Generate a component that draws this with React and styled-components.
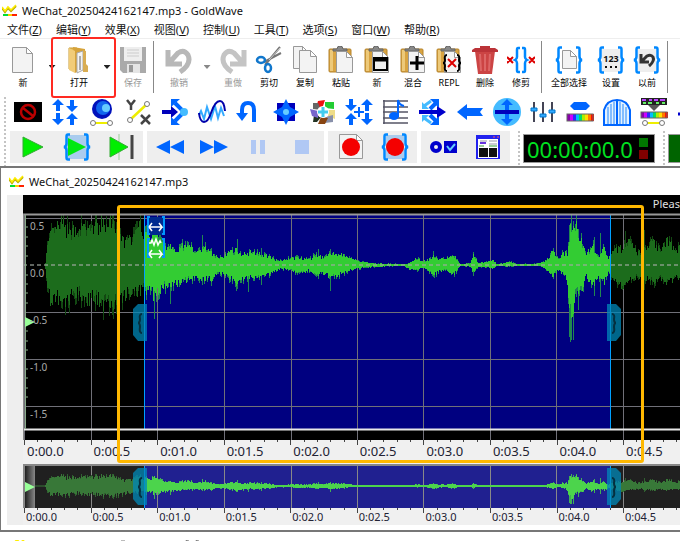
import React from 'react';
import styled, { createGlobalStyle } from 'styled-components';

const GlobalStyle = createGlobalStyle`
  * {
    margin: 0;
    padding: 0;
    box-sizing: border-box;
  }

  body {
    font-family: 'Noto Sans', 'Noto Sans CJK SC', sans-serif;
    background: #ffffff;
    color: #111111;
    overflow: hidden;
  }

  button {
    font: inherit;
    color: inherit;
    background: none;
    border: none;
  }

  svg {
    display: block;
    flex-shrink: 0;
  }
`;

const AppWindow = styled.div`
  position: relative;
  overflow: hidden;
  min-height: 100vh;
`;

const TitleBar = styled.header`
  display: flex;
  align-items: center;
  gap: 5px;
  height: ${props => (props.$inner ? '27px' : '21px')};
  padding-left: ${props => (props.$inner ? '8px' : '2px')};

  h1, h2 {
    font-size: 11px;
    font-weight: 400;
    line-height: 16px;
    white-space: nowrap;
  }
`;

const MenuBar = styled.nav`
  display: flex;
  align-items: center;
  height: 18px;
  gap: 14px;
  padding-left: 7px;
  border-bottom: 1px solid #eeeeee;
`;

const MenuItem = styled.button`
  font-size: 11px;
  line-height: 16px;
  white-space: nowrap;
`;

const Toolbar = styled.div`
  display: flex;
  height: 58px;
  padding-left: 5px;
`;

const ToolButton = styled.button`
  display: flex;
  flex: 0 0 ${props => (props.$wide ? '48px' : '36px')};
  flex-direction: column;
  align-items: center;
  padding-top: 7px;
  gap: 2px;
  color: ${props => (props.disabled ? '#999999' : '#000000')};
  font-size: 9px;
  line-height: 14px;
  white-space: nowrap;
`;

const DropButton = styled.button`
  display: flex;
  flex: 0 0 ${props => (props.$gap ? '20px' : '18px')};
  justify-content: center;
  padding: 26px 0 0 2px;
`;

const Caret = styled.span`
  width: 7px;
  height: 4px;
  background: ${props => (props.$faded ? '#888888' : '#222222')};
  clip-path: polygon(0 0, 100% 0, 50% 100%);
`;

const Separator = styled.span`
  flex: 0 0 1px;
  height: 52px;
  margin: 2px ${props => (props.$tight ? '3px' : '7px')} 0 2px;
  background: #888888;
`;

const GripRows = styled.div`
  display: flex;
`;

const Grip = styled.span`
  flex: 0 0 2px;
  margin: 0 3px 0 4px;
  background: repeating-linear-gradient(#c4c4c4 0 2px, transparent 2px 4px);
`;

const EffectBar = styled.div`
  display: flex;
  height: 34px;
`;

const EffectButton = styled.button`
  display: flex;
  flex: 0 0 37px;
  justify-content: center;
  align-items: center;
  height: 30px;

  &:nth-child(5n) {
    flex-basis: 36px;
  }
`;

const TransportBar = styled.div`
  display: flex;
  height: 35px;
  padding-left: 1px;
`;

const TransportGroup = styled.div`
  display: flex;
  height: 32px;
  margin-right: 4px;
  padding-left: 1px;
  background: #eeeeee;
`;

const TransportButton = styled.button`
  display: flex;
  flex: 0 0 44px;
  align-items: center;
  justify-content: center;
`;

const Counter = styled.div`
  display: flex;
  align-items: center;
  gap: 6px;
  flex: 0 0 132px;
  height: 29px;
  margin: 3px 4px 0 0;
  padding-left: 3px;
  border: 1px solid #999999;
  background: #000000;
  color: #00e020;
  font-size: 22px;
  line-height: 28px;
`;

const Lamps = styled.span`
  display: grid;
  gap: 3px;
`;

const Lamp = styled.i`
  width: 9px;
  height: 9px;
  background: ${props => props.$color};
`;

const Meter = styled.div`
  flex: 1;
  height: 29px;
  margin-top: 3px;
  border: 1px solid #999999;
  background: #006400;
`;

const DocumentWindow = styled.section`
  border: solid #777777;
  border-width: 2px 0 2px 1px;
`;

const DocumentBody = styled.div`
  display: flex;
  padding: 0 0 5px 6px;
`;

const Gutter = styled.div`
  flex: 0 0 16px;
  background: #eeeeee;
`;

const Tracks = styled.div`
  flex: 1;
  min-width: 0;
  overflow: hidden;
  background: #f0f0f0;
`;

const StatusStrip = styled.div`
  height: 18px;
  background: #000000;
  color: #e0e0e0;
  font-size: 11px;
  line-height: 18px;
  text-align: right;
`;

const Plot = styled.div`
  position: relative;
  margin-top: ${props => (props.$overview ? '5px' : '0')};
`;

const LevelScale = styled.div`
  position: absolute;
  top: 5px;
  left: 7px;
  color: #aaaaaa;
  font-size: 10px;
  line-height: 16px;

  span {
    display: block;
    height: 47px;
  }
`;

const Ruler = styled.div`
  display: grid;
  grid-template-columns: repeat(10, 1fr);
  height: ${props => (props.$small ? '17px' : '19px')};
  margin-left: 1px;
  color: #222233;
  font-size: ${props => (props.$small ? '11px' : '13px')};
  line-height: ${props => (props.$small ? '17px' : '22px')};
`;

const RulerMark = styled.span`
  position: relative;
  padding-left: ${props => (props.$small ? '1px' : '2px')};
  border-left: 1px solid transparent;
  white-space: nowrap;
`;

const MinorTicks = styled.i`
  position: absolute;
  inset: 0 0 auto -1px;
  display: grid;
  grid-template-columns: repeat(5, 1fr);
  height: 5px;

  b {
    height: 2px;
    border-left: 1px solid #444444;
  }

  b:first-child {
    height: 5px;
  }
`;

const Annotation = styled.div`
  position: absolute;
  pointer-events: none;
  border-radius: 3px;
`;

const OpenHighlight = styled(Annotation)`
  left: 51px;
  top: 37px;
  width: 65px;
  height: 61px;
  border: 2px solid #ff2a22;
`;

const SelectionHighlight = styled(Annotation)`
  left: 117px;
  top: 205px;
  width: 527px;
  height: 258px;
  border: 3px solid #ffb800;
`;

const NextWindow = styled.div`
  padding: 8px 0 0 13px;
`;

const BLUE = '#0066ff';
const NAVY = '#0000cc';
const SKY = '#44bbff';

function Logo() {
  return (
    <svg width="15" height="13" viewBox="0 0 15 13">
      <path d="M0 4l3 4 3-4 3 3 5-5" fill="none" stroke="#b8a800" strokeWidth="2" />
      <path d="M0 3l3 4 3-4 3 3 5-5" fill="none" stroke="#ffee00" strokeWidth="1.500" />
      <path d="M1 11h5" stroke="#00dd33" strokeWidth="2" />
      <path d="M6 11h4" stroke="#ffcc00" strokeWidth="2" />
      <path d="M10 11h5" stroke="#ff2200" strokeWidth="2" />
    </svg>
  );
}

function Icon({ size = 28, children }) {
  return (
    <svg width={size} height={size} viewBox="0 0 28 28" fill="none">
      {children}
    </svg>
  );
}

const Braces = ({ left = 1, right = 27, color = '#0088ff' }) => (
  <g stroke={color} strokeWidth="2.500">
    <path d={`M${left + 6} 1.500h-2q-1.500 0-1.500 2v7q0 3-2.500 3.500 2.500.5 2.500 3.500v7q0 2 1.500 2h2`} />
    <path d={`M${right - 6} 1.500h2q1.500 0 1.500 2v7q0 3 2.500 3.500-2.500.5-2.500 3.500v7q0 2-1.500 2h-2`} />
  </g>
);

const Page = ({ x = 3, y = 1, w = 21, h = 27 }) => (
  <g stroke="#999" strokeWidth="1">
    <path d={`M${x + 0.5} ${y + 0.5}h${w - 7}l6 6v${h - 8}h-${w - 1}z`} fill="#f3f3f3" />
    <path d={`M${x + w - 6.5} ${y + 0.5}v6h6z`} fill="#fff" />
  </g>
);

const Clipboard = ({ children }) => (
  <>
    <rect x="2" y="3" width="22" height="23" rx="1" fill="#d9a441" stroke="#b5832d" />
    <path d="M3 4h3v21H3z" fill="#edc979" />
    <path d="M6 5V3h4q0-3 3-3t3 3h4v2z" fill="#888" stroke="#666" />
    <Page x={9} y={5} w={17} h={23} />
    {children}
  </>
);

const UndoShape = ({ color = '#b8b8b8' }) => (
  <path d="M3 4v14h14M4 17L13 7q6-4 10 2 4 9-8 17" stroke={color} strokeWidth="5" />
);

// big icons of the file/edit toolbar
const toolIcons = {
  blank: <Page />,
  open: (
    <>
      <path d="M4 2h8v23l-8-2z" fill="#e5b751" stroke="#c79a35" />
      <path d="M8 1l12 2v18l-10 6z" fill="#d6a33b" />
      <path d="M12 7l6-2v19l-6 3z" fill="#f4f4f4" stroke="#aaa" />
      <path d="M18 4l3 1v13l2 2v6h-5z" fill="#d9ad53" />
      <path d="M4 2l6 3v22l-6-3z" fill="#f1cc78" />
      <path d="M15 10v14" stroke="#666" />
    </>
  ),
  save: (
    <>
      <path d="M1 1h26v26H4l-3-3z" fill="#aaa" />
      <path d="M5 1h18v14H5z" fill="#eee" />
      <path d="M8 4h12M8 7h12M8 10h12" stroke="#ccc" />
      <path d="M8 18h13v9H8z" fill="#e5e5e5" />
      <path d="M10 19h4v7h-4z" fill="#999" />
    </>
  ),
  undo: <UndoShape />,
  redo: <g transform="translate(28 0) scale(-1 1)"><UndoShape color="#c4c4c4" /></g>,
  cut: (
    <>
      <path d="M25 1L10 19M26 7L9 16" stroke="#777" strokeWidth="2" />
      <path d="M25 2L14 14" stroke="#ccc" />
      <ellipse cx="6" cy="14" rx="4" ry="3" stroke="#1177cc" strokeWidth="2.500" />
      <ellipse cx="13" cy="22" rx="3" ry="4" stroke="#1177cc" strokeWidth="2.500" />
    </>
  ),
  copy: (
    <>
      <Page x={2} y={0} w={16} h={24} />
      <Page x={8} y={4} w={18} h={24} />
    </>
  ),
  paste: <Clipboard />,
  pasteNew: (
    <Clipboard>
      <rect x="11" y="12" width="13" height="12" fill="#eee" stroke="#000" strokeWidth="2" />
      <path d="M10 13.500h15" stroke="#000" strokeWidth="4" />
    </Clipboard>
  ),
  mix: (
    <Clipboard>
      <path d="M18 10v14M11 17h14" stroke="#000" strokeWidth="3" />
    </Clipboard>
  ),
  replace: (
    <Clipboard>
      <path d="M12 9q-3 0-2 5-0 3-2 3 2 0 2 3-1 5 2 5M22 9q3 0 2 5 0 3 2 3-2 0-2 3 1 5-2 5" stroke="#000" strokeWidth="2" />
      <path d="M13 13l8 8m0-8l-8 8" stroke="#dd0000" strokeWidth="2" />
    </Clipboard>
  ),
  trash: (
    <>
      <path d="M4 5h20l-3 23H7z" fill="#cc4444" />
      <path d="M1 4l3-2h5V0h10v2h5l3 2v2H1z" fill="#bb3338" />
      <path d="M9 8l1 17M14 8v17M19 8l-1 17" stroke="#dd6666" strokeWidth="2" />
    </>
  ),
  trim: (
    <>
      <path d="M13 2h-2q-1 0-1 2v7q0 2-2 3 2 1 2 3v7q0 2 1 2h2M15 2h2q1 0 1 2v7q0 2 2 3-2 1-2 3v7q0 2-1 2h-2" stroke="#0088ff" strokeWidth="2.500" />
      <path d="M0 11l6 6m0-6l-6 6M22 11l6 6m0-6l-6 6" stroke="#dd0000" strokeWidth="2" />
    </>
  ),
  selectAll: <><Page x={7} y={4} w={15} h={20} /><Braces /></>,
  numbers: (
    <>
      <rect x="5" y="3" width="18" height="23" fill="#eee" />
      <Braces />
      <text x="14" y="16" textAnchor="middle" fontFamily="Noto Sans" fontSize="9" fontWeight="700" fill="#111">123</text>
      <path d="M8 21h2m3 0h2m3 0h2" stroke="#111" strokeWidth="2" />
    </>
  ),
  previous: (
    <>
      <rect x="5" y="3" width="18" height="23" fill="#eee" />
      <Braces />
      <path d="M8 8v8h8M9 15l5-5q4-2 6 1 2 4-4 9" stroke="#333" strokeWidth="3" />
    </>
  ),
  zoomOut: <circle cx="14" cy="11" r="10" fill="#f4f4f4" stroke="#c4c4c4" strokeWidth="2" />,
};

const tools = [
  { label: '新', icon: 'blank', drop: true, gap: true },
  { label: '打开', icon: 'open', drop: true },
  { label: '保存', icon: 'save', disabled: true },
  { sep: true },
  { label: '撤销', icon: 'undo', disabled: true, drop: true },
  { label: '重做', icon: 'redo', disabled: true },
  { label: '剪切', icon: 'cut' },
  { label: '复制', icon: 'copy' },
  { label: '粘贴', icon: 'paste' },
  { label: '新', icon: 'pasteNew' },
  { label: '混合', icon: 'mix' },
  { label: 'REPL', icon: 'replace' },
  { label: '删除', icon: 'trash' },
  { label: '修剪', icon: 'trim' },
  { sep: true, tight: true },
  { label: '全部选择', icon: 'selectAll', wide: true },
  { label: '设置', icon: 'numbers' },
  { label: '以前', icon: 'previous' },
  { sep: true },
  { icon: 'zoomOut', disabled: true },
];

const Arrow = ({ x, y, turn = 0, color = BLUE }) => (
  <path transform={`translate(${x} ${y}) rotate(${turn})`} d="M0-6l6 6H2v6h-4V0h-4z" fill={color} />
);

const Rainbow = ({ y, h = 7 }) => (
  <>
    {['#8800aa', '#cc00ff', '#3322ff', '#00bbff', '#00dd66', '#aaee00', '#ffdd00', '#ff7700', '#ff1100'].map((c, i) => (
      <rect key={c} x={1 + i * 3} y={y} width="3" height={h} fill={c} />
    ))}
    <rect x="1" y={y} width="26" height={h} stroke="#666" />
  </>
);

const Link = ({ y }) => (
  <>
    <path d={`M5 ${y}h18`} stroke="#eeee00" strokeWidth="2" />
    <circle cx="5" cy={y} r="2.500" fill="#fff" stroke="#777" />
    <circle cx="22" cy={y} r="2.500" fill="#fff" stroke="#777" />
  </>
);

const effects = [
  ['Censor', (
    <>
      <rect y="4" width="28" height="20" fill="#000" />
      <circle cx="14" cy="14" r="7" stroke="#bb0000" strokeWidth="2.500" />
      <path d="M9 10l10 8" stroke="#bb0000" strokeWidth="2.500" />
    </>
  )],
  ['Compressor', (
    <>
      <Arrow x={7} y={7} /><Arrow x={21} y={8} turn={180} />
      <Arrow x={7} y={21} turn={180} /><Arrow x={21} y={21} />
    </>
  )],
  ['Doppler', (
    <>
      <circle cx="14" cy="11" r="10" fill="#0011bb" />
      <circle cx="15" cy="10" r="7" fill="#1166ee" />
      <circle cx="18" cy="10" r="4" fill="#66ccff" />
      <Link y={25} />
    </>
  )],
  ['Expression', (
    <>
      <path d="M2 2l4 5 4-5M6 7v5M16 17l9 9m0-9l-9 9" stroke="#444" strokeWidth="2.500" />
      <path d="M6 21L22 6" stroke="#eeee00" strokeWidth="2.500" />
      <circle cx="5" cy="22" r="2.500" fill="#fff" stroke="#777" />
      <circle cx="22" cy="6" r="2.500" fill="#fff" stroke="#777" />
    </>
  )],
  ['Echo', (
    <>
      <path d="M14 5l9 9-9 9" stroke={BLUE} strokeWidth="4" />
      <path d="M10 1h9l-9 8zM10 27h9l-9-8z" fill={BLUE} />
      <path d="M1 12h9V8l7 6-7 6v-4H1z" fill="#0000bb" />
      <circle cx="23" cy="14" r="4" fill={SKY} />
    </>
  )],
  ['Filter', (
    <>
      <path d="M1 17l2-4 3 8 3-12 4 12 4-13 3 12 3-10 3 8" stroke="#33aaff" strokeWidth="2" />
      <path d="M1 15Q2 24 6 24q4 0 7-9 4-12 9-12 4 0 5 10" stroke="#0000aa" strokeWidth="2" />
    </>
  )],
  ['Reverse', (
    <>
      <path d="M7 16v-4q0-7 6-7t6 7v12" stroke={BLUE} strokeWidth="4" />
      <path d="M1 15h12l-6 8z" fill={BLUE} />
    </>
  )],
  ['Flanger', (
    <>
      <path d="M5 5h18v18H5z" fill="#0000bb" />
      <path d="M14 1l4 8 9 5-9 5-4 8-4-8-9-5 9-5z" fill={BLUE} />
      <circle cx="14" cy="14" r="3" fill="#66ccff" />
    </>
  )],
  ['Interpolate', (
    <>
      <path d="M9 3l7-1-3 9-6-1z" fill="#ee1111" />
      <path d="M16 4h9v7l-9-1z" fill="#22cc33" />
      <path d="M19 12l7 0v9l-7-3z" fill="#eedc88" />
      <path d="M16 19l8-2v7l-8 1z" fill="#8890aa" />
      <path d="M12 19l7 1-3 6H9z" fill="#884411" />
      <path d="M5 17l8 1-5 6H4z" fill="#223322" />
      <path d="M1 11l8 2v7l-6-2z" fill="#7766cc" />
      <path d="M4 5h5l3 7-8-1z" fill="#666" />
      <circle cx="14" cy="14" r="6" fill="#fff" />
      <path d="M14 9v10M9 14h10" stroke="#44ccee" strokeWidth="3" />
    </>
  )],
  ['Mechanize', (
    <>
      <Arrow x={6} y={7} turn={180} /><Arrow x={22} y={7} />
      <Arrow x={6} y={21} /><Arrow x={22} y={21} turn={180} />
      <path d="M14 9v10M9 14h10" stroke={BLUE} strokeWidth="2" />
    </>
  )],
  ['Pitch', (
    <>
      <path d="M1 3h25M1 9h25M1 14h25M1 20h25M1 25h25M2 2v24" stroke="#556" strokeWidth="1.500" />
      <path d="M16 19V2q1 5 6 6" stroke={BLUE} strokeWidth="2" />
      <ellipse cx="12" cy="18" rx="5" ry="4" fill={BLUE} />
    </>
  )],
  ['Reverb', (
    <>
      <path d="M5 8l7-5M5 20l7 5" stroke={SKY} strokeWidth="3" />
      <path d="M11 11l6-6M11 17l6 6" stroke={BLUE} strokeWidth="4" />
      <path d="M11 1h9v9zM11 27h9v-9z" fill={BLUE} />
      <path d="M3 4v7h7zM3 24v-7h7z" fill={SKY} />
      <path d="M0 12h18V8l9 6-9 6v-4H0z" fill={NAVY} />
    </>
  )],
  ['Rewind effect', <path key="p" d="M1 14l10-8v4h16l-3 4 3 4H11v4z" fill={BLUE} />],
  ['Volume', (
    <>
      <circle cx="14" cy="14" r="14" fill={SKY} />
      <Arrow x={14} y={7} /><Arrow x={14} y={21} turn={180} />
      <path d="M2 14h24" stroke="#0000bb" strokeWidth="4" />
    </>
  )],
  ['Equalizer', (
    <>
      <path d="M5 4v20M14 4v20M23 4v20" stroke="#445" strokeWidth="2" />
      <path d="M2 10h6v3H2zM11 16h6v3h-6zM20 12h6v3h-6z" fill="#33aaff" stroke="#0077cc" />
    </>
  )],
  ['Spectrum filter', (
    <>
      <path d="M4 8l4-4h12l4 4-4 4H8z" fill={BLUE} />
      <Rainbow y={16} h={7} />
    </>
  )],
  ['Noise gate', (
    <>
      <path d="M1 27V12Q4 2 14 2t13 10v15z" fill="#e4f2ff" stroke={BLUE} strokeWidth="2" />
      <path d="M5 9v17M8 6v20M11 4v22M17 4v22M20 6v20M23 9v17" stroke="#2288ff" />
      <path d="M14 2v25" stroke={BLUE} strokeWidth="2" />
    </>
  )],
  ['Noise reduction', (
    <>
      <rect x="1" y="0" width="26" height="7" fill="#222" />
      <path d="M2 2h4m3 0h3m2 0h4m2 0h5" stroke="#bb44ff" strokeWidth="2" />
      <path d="M3 5h3m2 0h4m4 0h3m3 0h3" stroke="#66ee66" strokeWidth="2" />
      <path d="M8 7h12l-6 6z" fill="#555" />
      <Rainbow y={14} h={6} />
      <Link y={25} />
    </>
  )],
  ['More', <path key="p" d="M1 16h10" stroke={NAVY} strokeWidth="3" />],
];

const transport = [
  [
    ['Play', <path key="p" d="M4 4l20 10L4 24z" fill="#00ee00" stroke="#33aa33" />],
    ['Play selection', (
      <>
        <rect x="4" y="2" width="20" height="24" fill="#aaccee" />
        <Braces />
        <path d="M5 5l18 9-18 9z" fill="#00e810" />
      </>
    )],
    ['Play to end', (
      <>
        <path d="M12 1v26" stroke="#99cc99" />
        <path d="M3 4l18 10L3 24z" fill="#00ee00" stroke="#33aa33" />
        <path d="M25 2v24" stroke="#444" strokeWidth="3" />
      </>
    )],
  ],
  [
    ['Rewind', <path key="p" d="M14 7v14L0 14zM28 7v14L14 14z" fill={BLUE} />],
    ['Fast forward', <path key="p" d="M0 7v14l14-7zM14 7v14l14-7z" fill={BLUE} />],
    ['Pause', <path key="p" d="M7 7h5v14H7zM16 7h5v14h-5z" fill="#b0c8f4" />],
    ['Stop', <path key="p" d="M7 7h14v14H7z" fill="#b0c8f4" />],
  ],
  [
    ['Record new', <><Page x={2} y={1} w={24} h={26} /><circle cx="14" cy="14" r="9" fill="#f40000" /></>],
    ['Record selection', (
      <>
        <rect x="5" y="2" width="18" height="24" fill="#aaccee" />
        <Braces />
        <circle cx="14" cy="14" r="9" fill="#f40000" />
      </>
    )],
  ],
  [
    ['Options', (
      <>
        <circle cx="6" cy="14" r="4" stroke={NAVY} strokeWidth="4" />
        <path d="M14 8h13v12H14z" fill={NAVY} />
        <path d="M17 13l3 4 5-6" stroke="#66ccff" strokeWidth="2" />
      </>
    )],
    ['Visuals', (
      <>
        <rect x="2" y="2" width="24" height="24" fill="#2222ee" />
        <path d="M4 6h20v19H4z" fill="#fff" />
        <path d="M5 15h9v9H5zM15 15h8v9h-8z" fill="#111" />
        <path d="M6 8h7M15 8h8M15 11h8" stroke="#99a" />
        <path d="M6 10h6" stroke="#6633dd" strokeWidth="2" />
        <path d="M5 13h5m5 0h8" stroke="#339933" />
        <path d="M19 4h2m2 0h2" stroke="#ff5555" />
      </>
    )],
  ],
];

// [time offset in px, level above zero, level below zero]
const envelope = [
  [22, 4, 4], [24, 22, 28], [27, 35, 44], [33, 44, 38], [38, 50, 46], [46, 38, 42],
  [54, 46, 32], [62, 42, 44], [72, 46, 40], [80, 50, 46], [90, 50, 47], [95, 34, 44],
  [102, 28, 38], [110, 34, 34], [118, 48, 32], [121, 38, 28], [127, 34, 34],
  [131, 42, 38], [134, 36, 32], [140, 22, 26], [147, 22, 26], [153, 20, 24],
  [158, 22, 20], [165, 22, 17], [174, 18, 15], [180, 22, 18], [187, 15, 18],
  [196, 8, 10], [204, 14, 13], [213, 18, 22], [222, 13, 17], [229, 16, 16],
  [234, 15, 14], [244, 11, 12], [257, 5, 5], [267, 8, 6], [274, 9, 10], [286, 8, 7],
  [295, 13, 12], [301, 8, 10], [307, 14, 15], [317, 13, 12], [326, 8, 6], [337, 4, 4],
  [352, 2, 2], [380, 1, 1], [386, 3, 5], [393, 8, 6], [400, 4, 4], [410, 10, 11],
  [422, 7, 6], [431, 11, 11], [437, 1, 1], [447, 2, 2], [450, 12, 10], [455, 2, 2],
  [465, 4, 3], [469, 6, 4], [474, 1, 1], [486, 4, 2], [494, 1, 1], [517, 2, 1],
  [525, 8, 9], [529, 19, 13], [534, 8, 8], [540, 14, 10], [544, 14, 22],
  [547, 44, 60], [550, 42, 50], [553, 45, 30], [556, 38, 34], [559, 22, 26], [563, 15, 14],
  [570, 22, 26], [575, 10, 14], [581, 22, 22], [585, 7, 8], [591, 20, 20], [598, 20, 26],
  [605, 30, 18], [614, 14, 14], [622, 20, 16], [630, 28, 20], [637, 16, 16],
  [644, 34, 22], [652, 18, 16], [659, 26, 20], [670, 18, 16],
];

const spikes = {
  131: [38, 54], 147: [18, 39], 179: [30, 20], 214: [26, 24], 225: [8, 27], 238: [17, 20],
  295: [16, 14], 307: [16, 26], 410: [14, 12], 450: [13, 11], 546: [40, 72], 547: [42, 77],
  548: [50, 75], 550: [44, 75], 553: [50, 32], 555: [36, 45], 571: [28, 31], 577: [32, 32],
  587: [34, 36], 602: [34, 20], 621: [35, 25],
};

function sampleWave() {
  let seed = 7;
  const random = () => {
    seed = (seed * 16807) % 2147483647;
    return seed / 2147483647;
  };
  const columns = [];
  for (let x = 22; x < 657; x++) {
    const next = envelope.findIndex(point => point[0] > x);
    const [x0, up0, down0] = envelope[next - 1];
    const [x1, up1, down1] = envelope[next];
    const t = (x - x0) / (x1 - x0);
    const up = (up0 + (up1 - up0) * t) * (0.6 + random() * 0.4);
    const down = (down0 + (down1 - down0) * t) * (0.6 + random() * 0.4);
    const [peakUp, peakDown] = spikes[x] || [up * (random() > 0.6 ? 1.2 : 1), down * (random() > 0.6 ? 1.2 : 1)];
    columns.push({ x, up, down, peakUp, peakDown });
  }
  return columns;
}

const wave = sampleWave();

function wavePath(from, to, center, scale, peaks) {
  return wave
    .filter(column => column.x >= from && column.x < to)
    .map(column => {
      const up = Math.min(50, peaks ? column.peakUp : column.up);
      const down = peaks ? column.peakDown : column.down;
      return `M${column.x + 0.5} ${center - Math.max(1, Math.round(up * scale))}V${center + Math.max(1, Math.round(down * scale))}`;
    })
    .join('');
}

const gridX = [1, 68, 134, 201, 268, 334, 400, 467, 533, 600];

const Waveform = ({ center, scale, dim, dimPeak, bright, brightPeak }) => (
  <g shapeRendering="crispEdges">
    <path d={wavePath(0, 121, center, scale, true) + wavePath(587, 657, center, scale, true)} stroke={dimPeak} />
    <path d={wavePath(0, 121, center, scale) + wavePath(587, 657, center, scale)} stroke={dim} />
    <path d={wavePath(121, 587, center, scale, true)} stroke={brightPeak} />
    <path d={wavePath(121, 587, center, scale)} stroke={bright} />
  </g>
);

const Handles = ({ y }) => (
  <>
    <path d={`M124 ${y}h-9l-5 5v26l5 6h9z`} fill="#0088b8" fillOpacity=".75" />
    <path d={`M584 ${y}h9l5 5v26l-5 6h-9z`} fill="#0088b8" fillOpacity=".75" />
    <path d={`M119 ${y + 10}q-3 0-2 5 0 4-2 4 2 0 2 4-1 6 2 6M589 ${y + 10}q3 0 2 5 0 4 2 4-2 0-2 4 1 6-2 6`} stroke="#043040" strokeWidth="2" fill="none" />
  </>
);

function MainWave() {
  return (
    <svg width="100%" height="227" viewBox="0 0 657 227" preserveAspectRatio="none" role="img" aria-label="Waveform">
      <rect width="657" height="227" fill="#000" />
      <rect x="121" y="2" width="467" height="214" fill="#000080" />
      <path d="M0 5.500h657M0 99.500h657M0 146.500h657M0 193.500h657" stroke="#707078" />
      {gridX.map(x => <path key={x} d={`M${x + 0.5} 2v225`} stroke="#707078" />)}
      <Waveform center={52} scale={1} dim="#1c6c1c" dimPeak="#124812" bright="#33cc33" brightPeak="#208850" />
      <path d="M0 52h657" stroke="#a0a8a0" strokeWidth="2" strokeDasharray="4 3" strokeOpacity=".6" />
      <path d="M121.500 2v214M587.500 2v214" stroke="#00a0ff" />
      <path d="M0 1.500h657" stroke="#999999" strokeWidth="2" />
      <path d="M0 216.500h657" stroke="#e8e8e8" strokeWidth="2" />
      <path d="M.5 1v226" stroke="#888" />
      <path d="M2.500 2v214" stroke="#88aa88" />
      <path d="M2 14h3M2 24h3M2 33h3M2 43h3M2 62h3M2 71h3M2 80h3M2 90h3M2 109h3M2 118h3M2 128h3M2 137h3M2 156h3M2 165h3M2 175h3M2 184h3" stroke="#88aa88" />
      <path d="M2 104l10 5-10 5z" fill="#99ff99" />
      <Handles y={91} />
      <g fill="none" stroke="#0099ff" strokeWidth="2">
        <rect x="125" y="4" width="16" height="18" fill="#002a90" stroke="none" />
        <path d="M127 4h-2v17h2M139 4h2v17h-2M127 26h-2v18h2M139 26h2v18h-2" />
        <path d="M126 14h13l-3-4M126 14l3-4m-3 4l3 4m10-4l-3 4" stroke="#fff" strokeWidth="1.500" />
        <path d="M126 41h13l-3-4M126 41l3-4m-3 4l3 4m10-4l-3 4M126 30h2l1-3 2 5 2-6 2 6 2-4 1 2" stroke="#fff" strokeWidth="1.500" />
      </g>
    </svg>
  );
}

function OverviewWave() {
  return (
    <svg width="100%" height="44" viewBox="0 0 657 44" preserveAspectRatio="none" role="img" aria-label="Overview">
      <defs>
        <linearGradient id="edge">
          <stop offset="0" stopColor="#202020" />
          <stop offset="1" stopColor="#888888" />
        </linearGradient>
      </defs>
      <rect width="657" height="44" fill="#202020" />
      <rect x="121" width="467" height="44" fill="#202090" />
      <rect x="2" width="10" height="44" fill="url(#edge)" />
      {gridX.map(x => <path key={x} d={`M${x + 0.5} 2v42`} stroke="#888888" />)}
      <path d="M12 22h10" stroke="#387838" />
      <Waveform center={22} scale={0.24} dim="#387838" dimPeak="#306030" bright="#4cd44c" brightPeak="#40b055" />
      <path d="M121.500 2v42M587.500 2v42" stroke="#00a0ff" />
      <path d="M2 18l10 5-10 5z" fill="#99ff99" />
      <Handles y={4} />
      <path d="M0 1h657" stroke="#888" strokeWidth="2" />
      <path d="M.5 0v44" stroke="#888" />
    </svg>
  );
}

const times = ['0:00.0', '0:00.5', '0:01.0', '0:01.5', '0:02.0', '0:02.5', '0:03.0', '0:03.5', '0:04.0', '0:04.5'];

// marks that fit across the window, the last one runs past its edge
const visibleMarks = 9.87;

function TimeRuler({ small }) {
  return (
    <Ruler $small={small} style={{ width: `${(times.length / visibleMarks) * 100}%` }}>
      {times.map(time => (
        <RulerMark key={time} $small={small}>
          <MinorTicks><b /><b /><b /><b /><b /></MinorTicks>
          {time}
        </RulerMark>
      ))}
    </Ruler>
  );
}

const menus = [
  ['文件', 'Z'], ['编辑', 'Y'], ['效果', 'X'], ['视图', 'V'], ['控制', 'U'],
  ['工具', 'T'], ['选项', 'S'], ['窗口', 'W'], ['帮助', 'R'],
];

function App() {
  return (
    <>
      <GlobalStyle />
      <AppWindow>
        <TitleBar>
          <Logo />
          <h1>WeChat_20250424162147.mp3 - GoldWave</h1>
        </TitleBar>

        <MenuBar>
          {menus.map(([name, key]) => (
            <MenuItem key={key}>{name}(<u>{key}</u>)</MenuItem>
          ))}
        </MenuBar>

        <Toolbar>
          {tools.map((tool, index) => (
            tool.sep ? (
              <Separator key={index} $tight={tool.tight} />
            ) : (
              <React.Fragment key={index}>
                <ToolButton disabled={tool.disabled} $wide={tool.wide}>
                  <Icon>{toolIcons[tool.icon]}</Icon>
                  {tool.label}
                </ToolButton>
                {tool.drop && (
                  <DropButton $gap={tool.gap} aria-label={`${tool.label} ▾`}>
                    <Caret $faded={tool.disabled} />
                  </DropButton>
                )}
              </React.Fragment>
            )
          ))}
        </Toolbar>

        <GripRows>
          <Grip />
          <div>
            <EffectBar>
              {effects.map(([name, art]) => (
                <EffectButton key={name} aria-label={name}><Icon>{art}</Icon></EffectButton>
              ))}
            </EffectBar>
            <TransportBar>
              {transport.map((group, index) => (
                <TransportGroup key={index}>
                  {group.map(([name, art]) => (
                    <TransportButton key={name} aria-label={name}><Icon>{art}</Icon></TransportButton>
                  ))}
                </TransportGroup>
              ))}
              <Grip />
              <Counter>
                00:00:00.0
                <Lamps>
                  <Lamp $color="#007800" />
                  <Lamp $color="#800000" />
                </Lamps>
              </Counter>
              <Grip />
              <Meter />
            </TransportBar>
          </div>
        </GripRows>

        <DocumentWindow>
          <TitleBar $inner>
            <Logo />
            <h2>WeChat_20250424162147.mp3</h2>
          </TitleBar>
          <DocumentBody>
            <Gutter />
            <Tracks>
              <StatusStrip>Pleas</StatusStrip>
              <Plot>
                <MainWave />
                <LevelScale>
                  <span>0.5</span>
                  <span>0.0</span>
                  <span>-0.5</span>
                  <span>-1.0</span>
                  <span>-1.5</span>
                </LevelScale>
              </Plot>
              <TimeRuler />
              <Plot $overview>
                <OverviewWave />
              </Plot>
              <TimeRuler small />
            </Tracks>
          </DocumentBody>
        </DocumentWindow>

        <NextWindow>
          <svg width="190" height="12" viewBox="0 0 190 12">
            <path d="M1 3l3-3 3 3 4-3" stroke="#ffee00" strokeWidth="2" fill="none" />
            <path d="M47 1v9M108 1h4v9M129 1v9M136 1v9M148 1v9M152 1v9M172 2q0-2 4-2M182 2q0-2 4-2" stroke="#777" fill="none" />
          </svg>
        </NextWindow>

        <OpenHighlight />
        <SelectionHighlight />
      </AppWindow>
    </>
  );
}

export default App;
